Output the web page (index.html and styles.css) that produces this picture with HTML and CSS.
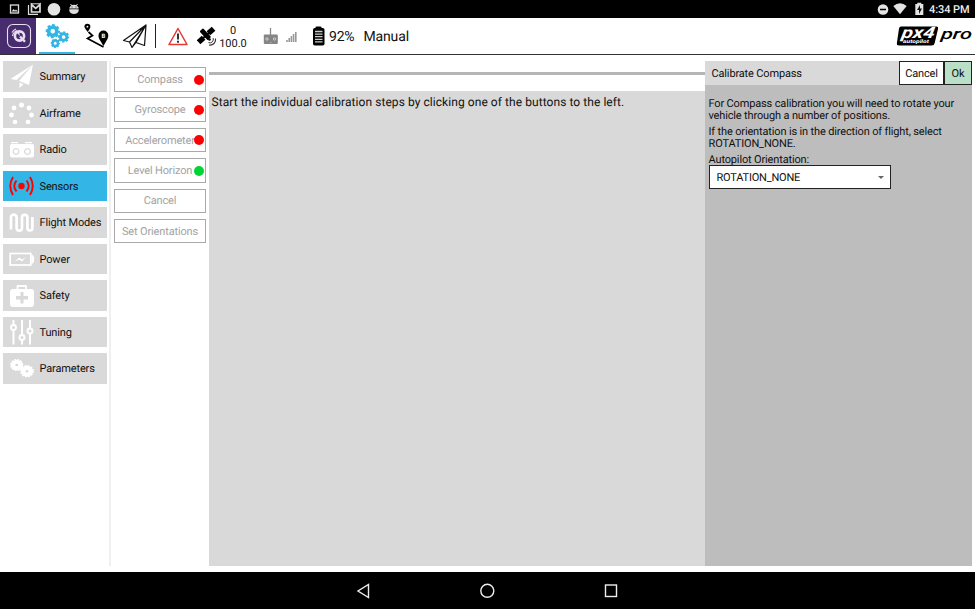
FILE: index.html
```html
<!DOCTYPE html>
<html lang="en">
<head>
<meta charset="utf-8">
<title>Vehicle Setup - Sensors</title>
<link rel="stylesheet" href="styles.css">
</head>
<body>
<svg class="defs" width="0" height="0">
  <symbol id="gear" viewBox="0 0 24 24">
    <circle cx="12" cy="12" r="6.800" fill="none" stroke="currentColor" stroke-width="6"/>
    <circle cx="12" cy="12" r="10" fill="none" stroke="currentColor" stroke-width="4" pathLength="16" stroke-dasharray="1.150 .85" stroke-dashoffset="0.5"/>
  </symbol>
  <symbol id="cog" viewBox="0 0 24 24" preserveAspectRatio="none">
    <circle cx="12" cy="12" r="6.500" fill="none" stroke="currentColor" stroke-width="8"/>
    <circle cx="12" cy="12" r="10.500" fill="none" stroke="currentColor" stroke-width="3" pathLength="24" stroke-dasharray="1.200 .8"/>
  </symbol>
</svg>
<div class="status">
  <svg width="90" height="18" viewBox="0 0 90 18" fill="none" stroke="#ddd">
    <rect x="10.500" y="5" width="8" height="8" stroke-width="1.300"/><path d="M11.500 11.500l2-2.500 1.500 1.500 1-1 2 2z" fill="#ddd" stroke="none"/>
    <path d="M28.500 5v9.300H38" stroke-width="1.200"/><path d="M31.500 12V4.500l4.200 3.800L40 4.500V12z" stroke-width="1.700"/><path d="M31 3.800h9.500" stroke-width="1"/>
    <circle cx="54" cy="9.200" r="6.300" fill="#e4e4e4" stroke="none"/>
    <path d="M69.300 8.500a4.700 3.700 0 0 1 9.400 0zM69.300 9.300h9.400v1.200a4.700 3.500 0 0 1-9.400 0z" fill="#ddd" stroke="none"/><path d="M70.500 4l1.500 2M77.500 4L76 6" stroke-width="1"/>
    <path d="M71.500 7h1M75.500 7h1" stroke="#333"/>
  </svg>
  <svg class="right-icons" width="52" height="18" viewBox="0 0 52 18">
    <circle cx="8" cy="9.500" r="5.300" fill="#e4e4e4"/><path d="M5 9.500h6" stroke="#000" stroke-width="1.500"/>
    <path d="M18.300 6Q25 .5 31.700 6L25 14.300z" fill="#e4e4e4"/>
    <path d="M40.300 4h2V2.800h4V4h2v11h-8z" fill="#e4e4e4"/><path d="M45 5l-3 5h2v4l3-5.500h-2z" fill="#111"/>
  </svg>
  <span class="clock">4:34 PM</span>
</div>
<header class="toolbar">
  <div class="brand">
    <svg width="36" height="36" viewBox="0 0 36 36" fill="none" stroke="#e8e0f0">
      <rect x="7.500" y="6.500" width="23" height="23" rx="5.500" stroke-width="1.100"/>
      <circle cx="19.500" cy="18" r="4.600" stroke-width="2.600"/>
      <path d="M20 18.500l5 5.300" stroke-width="2.400"/>
      <path d="M12.500 18a7 7 0 0 1 5-5.500M12 14.500a8 8 0 0 1 4-3.500" stroke-width="1.200"/><path d="M16 14l4 4-1-4.500z" fill="#e8e0f0" stroke="none"/>
    </svg>
  </div>
  <div class="tab active">
    <svg width="36" height="34" viewBox="0 0 36 34">
      <use href="#gear" x="6.500" y="6" width="14.500" height="14.500"/><use href="#gear" x="18.800" y="13.200" width="11.600" height="11.600"/><use href="#gear" x="11.500" y="20.500" width="9.500" height="9.500"/>
    </svg>
  </div>
  <svg class="tool route" width="30" height="36" viewBox="0 0 30 36">
    <path d="M5.500 14l4 3.500-5 3 16 8.500" fill="none" stroke="#000" stroke-width="1.700"/>
    <path d="M4.700 14C2 10.500 1.400 9.500 1.400 8.800a3 3 0 0 1 6 0c0 1-.6 2-2.700 5.200z"/>
    <path d="M20.500 28c-3.500-6-5-7.500-5-10.500a4.900 4.900 0 0 1 9.800 0c0 3-1.500 4.500-4.800 10.500z"/>
    <circle cx="4.400" cy="8.700" r=".9" fill="#fff"/><text x="18.500" y="20" class="pin">B</text>
  </svg>
  <svg class="tool plane" width="30" height="36" viewBox="0 0 30 36" fill="none" stroke="#111" stroke-width="1.200" stroke-linejoin="round">
    <path d="M26 7L3.500 22.500l6 1.500L26 7l-1.500 20.500-8.500-3zM9.500 24l2.500 5.500 4-5L26 7 12 29.500"/>
  </svg>
  <i class="rule"></i>
  <svg class="tool alert" width="22" height="36" viewBox="0 0 22 36">
    <path d="M11 10.500L2 26.500h18z" fill="none" stroke="#e53935" stroke-width="1.500" stroke-linejoin="round"/>
    <path d="M11 15.500v6M11 22.700v2" stroke="#111" stroke-width="1.700"/>
  </svg>
  <svg class="tool sat" width="22" height="36" viewBox="0 0 22 36">
    <g transform="translate(9 17.500) rotate(-42)">
      <rect x="-10" y="-2.700" width="6.800" height="5.400"/><rect x="3.200" y="-2.700" width="7" height="5.400"/><path d="M-4-1h8v2h-8z"/>
    </g>
    <g transform="translate(9 17) rotate(48)"><rect x="-7" y="-2.400" width="12" height="4.800" rx="1"/></g>
    <path d="M12 27a5.500 5.500 0 0 0 6.500-6.500" fill="none" stroke="#333" stroke-width="1.200"/><path d="M11.500 24.600a3.500 3.500 0 0 0 4.600-4.500" fill="none" stroke="#333"/><circle cx="12.500" cy="21.500" r="1.300"/>
  </svg>
  <div class="gps"><span>0</span><span>100.0</span></div>
  <svg class="tool rc" width="36" height="36" viewBox="0 0 36 36">
    <path d="M7.500 10v8" stroke="#888" stroke-width="1.300"/><rect x=".8" y="16.500" width="14" height="9.500" rx="1" fill="#858585"/>
    <circle cx="4" cy="21" r="1.200" fill="none" stroke="#ddd" stroke-width=".8"/><circle cx="11.500" cy="21" r="1.200" fill="none" stroke="#ddd" stroke-width=".8"/><path d="M6.500 24.500h2.500" stroke="#aaa" stroke-width=".7"/>
    <path d="M24 24v-2M26.200 24v-4M28.400 24v-6M30.600 24v-8M32.800 24V14" stroke="#999" stroke-width="1.600"/>
  </svg>
  <svg class="tool battery" width="14" height="36" viewBox="0 0 14 36">
    <rect x="3.500" y="8.500" width="6" height="3" rx="1"/><rect x="1" y="10" width="11.500" height="17.500" rx="1.800"/>
    <path d="M3 13.500h7.500M3 16.100h7.500M3 18.700h7.500M3 21.300h7.500M3 23.900h7.500" stroke="#ccc" stroke-width="1.300"/>
  </svg>
  <span class="percent">92%</span>
  <span class="mode">Manual</span>
  <svg class="logo" width="79" height="36" viewBox="0 0 79 36">
    <path d="M5 8.500h35.500q2 0 1.600 2l-3.400 14.500q-.5 2.500-3 2.500H3.200q-2.800 0-2.300-2.500L3 10.500q.4-2 2-2z"/>
    <g transform="translate(5 20) skewX(-10)"><text class="px" textLength="33" lengthAdjust="spacingAndGlyphs">px4</text></g>
    <text class="auto" x="7" y="25" textLength="26" lengthAdjust="spacingAndGlyphs">autopilot</text>
    <g transform="translate(44.500 20.500) skewX(-8)"><text class="pro" textLength="31" lengthAdjust="spacingAndGlyphs">pro</text></g>
  </svg>
</header>
<div class="content">
  <nav class="sidebar">
    <div class="item"><svg viewBox="0 0 26 30"><path d="M24 3.500L1.500 18l6 1zM24 3.500L10 20l10 4zM10.500 21.500v5.500l4-3.700z"/></svg><span>Summary</span></div>
    <div class="item"><svg viewBox="0 0 26 30"><circle cx="12.500" cy="7" r="2.500"/><circle cx="5" cy="10" r="2.400"/><circle cx="20" cy="10" r="2.400"/><circle cx="2.500" cy="17" r="2.400"/><circle cx="22.500" cy="17" r="2.400"/><circle cx="6" cy="24" r="2.300"/><circle cx="19" cy="24" r="2.300"/></svg><span>Airframe</span></div>
    <div class="item"><svg viewBox="0 0 26 30"><path fill-rule="evenodd" d="M2.500 10h21q1.500 0 1.500 2v9.500q0 2-2 2H3q-2 0-2-2V12q0-2 1.500-2zM7 14a3.500 3.500 0 1 0 .01 0zM18.500 14a3.500 3.500 0 1 0 .01 0z"/><path d="M2 8h7v1.200H2zM16 8h7v1.200h-7z"/><circle cx="7" cy="17.500" r="2.200"/><circle cx="18.500" cy="17.500" r="2.200"/></svg><span>Radio</span></div>
    <div class="item selected"><svg viewBox="0 0 26 30"><circle cx="12.500" cy="15" r="3.200" fill="#f00"/><g fill="none" stroke="#f00"><path d="M7.500 9.500q-4.500 5.500 0 11M17.500 9.500q4.500 5.500 0 11" stroke-width="1.900"/><path d="M4 6q-5.500 9 0 18M21 6q5.500 9 0 18" stroke-width="1.900"/></g></svg><span>Sensors</span></div>
    <div class="item"><svg viewBox="0 0 26 30"><path d="M2 22.500V10.500a2.800 2.800 0 0 1 5.600 0v10.500a2.700 2.700 0 0 0 5.400 0v-10.500a2.700 2.700 0 0 1 5.400 0v10.500a2.500 2.500 0 0 0 5 0V10" fill="none" stroke="#fff" stroke-width="2.700"/></svg><span>Flight Modes</span></div>
    <div class="item"><svg viewBox="0 0 26 30"><rect x="1.200" y="9.500" width="20.600" height="11.500" fill="none" stroke="#fff" stroke-width="1.700"/><path d="M22.500 10.500q2.700.5 2.700 4.700t-2.700 4.800zM5.500 18l4.500-4.500 3 2 4-2.500-4 4.500-3-2z"/></svg><span>Power</span></div>
    <div class="item"><svg viewBox="0 0 26 30"><path d="M8.500 10V6h8.500v4" fill="none" stroke="#fff" stroke-width="1.800"/><path fill-rule="evenodd" d="M4 9h18q3 0 3 3v12q0 3-3 3H4q-3 0-3-3V12q0-3 3-3zM11.500 12v4h-4.500v3.500h4.500v4h3v-4H19V16h-4.500v-4z"/></svg><span>Safety</span></div>
    <div class="item"><svg viewBox="0 0 26 30"><path d="M4.500 3v24.500M13 3v24.500M21 3v24.500" stroke="#fff" stroke-width="2"/><g fill="#d9d9d9" stroke="#fff" stroke-width="1.900"><circle cx="4.500" cy="10.500" r="2.500"/><circle cx="13" cy="20.500" r="2.500"/><circle cx="21" cy="14" r="2.500"/></g></svg><span>Tuning</span></div>
    <div class="item"><svg viewBox="0 0 26 30"><use href="#cog" x="1" y="6" width="13.500" height="12"/><use href="#cog" x="11" y="12" width="14" height="12.500"/></svg><span>Parameters</span></div>
  </nav>
  <div class="steps">
    <button><span>Compass</span><i class="dot"></i></button>
    <button><span>Gyroscope</span><i class="dot"></i></button>
    <button><span>Accelerometer</span><i class="dot"></i></button>
    <button><span>Level Horizon</span><i class="dot done"></i></button>
    <button><span>Cancel</span></button>
    <button><span>Set Orientations</span></button>
  </div>
  <main class="main">
    <div class="progress"></div>
    <div class="log">Start the individual calibration steps by clicking one of the buttons to the left.</div>
  </main>
  <aside class="panel">
    <div class="panel-head"><span class="title">Calibrate Compass</span><button class="cancel">Cancel</button><button class="ok">Ok</button></div>
    <div class="panel-body">
      <p>For Compass calibration you will need to rotate your<br>vehicle through a number of positions.</p>
      <p>If the orientation is in the direction of flight, select<br>ROTATION_NONE.</p>
      <label>Autopilot Orientation:</label>
      <div class="select">ROTATION_NONE<i class="caret"></i></div>
    </div>
  </aside>
</div>
<footer class="android">
  <svg width="14" height="16" viewBox="0 0 14 16"><path d="M12.500 1.500v13L2 8z"/></svg>
  <svg width="16" height="16" viewBox="0 0 16 16"><circle cx="8.300" cy="7.800" r="6.500"/></svg>
  <svg width="14" height="16" viewBox="0 0 14 16"><rect x="1.500" y="2" width="11" height="11.500"/></svg>
</footer>
</body>
</html>
```
FILE: styles.css
```css
* { box-sizing: border-box; }
body { margin: 0; width: 975px; height: 609px; overflow: hidden; display: flex; flex-direction: column; background: #fff; color: #111; font: 11px/12px Roboto, sans-serif; text-rendering: geometricPrecision; }
svg { display: block; flex: none; }
.defs { position: absolute; }
button { font: inherit; padding: 0; color: inherit; text-rendering: inherit; letter-spacing: inherit; }

.status { height: 18px; flex: none; background: #000; display: flex; align-items: center; }
.right-icons { margin-left: auto; }
.clock { color: #eee; font-size: 11px; font-weight: 500; width: 48px; padding: 1px 0 0 2px; white-space: nowrap; letter-spacing: -.08px; }

.toolbar { height: 37px; flex: none; display: flex; border-bottom: 1px solid #333; }
.brand { width: 36px; height: 36px; background: #472d6d; }
.tab { width: 36px; height: 36px; margin-left: 3px; color: #33b5e5; }
.tab.active { border-bottom: 2px solid #33b5e5; }
.route { margin-left: 8px; }
.pin { fill: #fff; font: bold 6px Roboto, sans-serif; }
.plane { margin-left: 7px; }
.rule { width: 1px; height: 24px; margin: 6px 0 0 5px; background: #222; }
.alert { margin-left: 11px; }
.sat { margin-left: 8px; }
.gps { width: 34px; margin-left: -3px; padding-top: 7px; font-size: 11px; line-height: 12px; display: flex; flex-direction: column; align-items: center; }
.gps span { height: 12px; }
.gps span + span { padding-top: .5px; }
.rc { margin-left: 13px; }
.battery { margin-left: 13px; }
.percent, .mode { font-size: 14px; line-height: 38px; white-space: nowrap; }
.percent { margin-left: 3px; width: 34.500px; letter-spacing: -.2px; }
.mode { letter-spacing: -.15px; }
.logo { margin-left: auto; }
.px { fill: #fff; font: italic bold 16px Roboto, sans-serif; }
.auto { fill: #fff; font: italic bold 5px Roboto, sans-serif; }
.pro { font: italic 500 15px Roboto, sans-serif; }

.content { flex: 1; min-height: 0; display: flex; padding: 6px 3px; letter-spacing: -.15px; }
.sidebar { width: 108px; padding-right: 4px; border-right: 2px solid #f0f0f0; display: flex; flex-direction: column; gap: 6px; }
.item { height: 30.500px; flex: none; width: 104px; background: #d9d9d9; display: flex; align-items: center; padding-left: 6px; color: #111; white-space: nowrap; }
.item svg { width: 26px; height: 30px; margin-right: 4.500px; fill: #fff; color: #fff; }
.item span { padding-top: 1.500px; }
.item.selected { background: #33b5e5; }
.steps { width: 92px; margin-left: 3px; padding-top: 6px; display: flex; flex-direction: column; gap: 5.900px; }
.steps button { position: relative; height: 24.500px; flex: none; background: #fff; border: 1px solid #aaa; color: #a3a3a3; white-space: nowrap; padding-top: 1px; }
.dot { position: absolute; right: 1.500px; top: 6.500px; width: 10px; height: 10px; border-radius: 50%; background: #f00; }
.dot.done { background: #00d535; }
.main { flex: 1; margin-left: 3px; display: flex; flex-direction: column; }
.progress { height: 3px; margin: 11px 0 16px; background: #b5b5b5; }
.log { flex: 1; background: #d9d9d9; padding: 4px 2.500px; font-size: 12px; line-height: 14px; white-space: nowrap; letter-spacing: .065px; }
.panel { width: 267px; background: #bdbdbd; }
.panel-head { height: 24px; display: flex; align-items: center; background: #d9d9d9; }
.title { flex: 1; padding: 1px 0 0 6.500px; }
.panel-head button { height: 24px; border: 1px solid #222; background: #fff; padding-top: 1px; }
.panel-head .cancel { width: 45px; }
.panel-head .ok { width: 28px; background: #b9dfc6; }
.panel-body { padding: 13px 3.500px; }
.panel-body p { margin: 0 0 4px; white-space: nowrap; }
.panel-body label { display: block; height: 11px; }
.select { width: 182px; height: 24px; background: #fff; border: 1px solid #222; display: flex; align-items: center; justify-content: space-between; padding: 1px 6px 0 7px; letter-spacing: -.2px; }
.caret { border: 3px solid transparent; border-top-color: #666; border-bottom: 0; }

.android { height: 37px; flex: none; background: #000; display: flex; justify-content: center; align-items: center; gap: 109px; padding-right: 1px; }
.android svg { fill: none; stroke: #eee; stroke-width: 1.400; }
```
